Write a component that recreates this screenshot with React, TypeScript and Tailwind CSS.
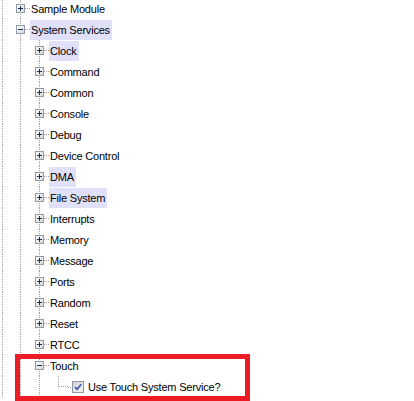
import React from "react";

type CellProps = { top?: boolean; bottom?: boolean; right?: boolean; box?: "plus" | "minus" };

const DOT = "#a0a0a0";

function Cell({ top, bottom, right, box }: CellProps) {
  return (
    <svg width="19" height="21" viewBox="0 0 19 21" shapeRendering="crispEdges" className="shrink-0 block">
      {top && <line x1="9.5" y1="0" x2="9.5" y2="11" stroke={DOT} strokeDasharray="1 1" />}
      {bottom && <line x1="9.5" y1="10" x2="9.5" y2="21" stroke={DOT} strokeDasharray="1 1" />}
      {right && <line x1="10" y1="10.5" x2="19" y2="10.5" stroke={DOT} strokeDasharray="1 1" />}
      {box && (
        <g>
          <defs>
            <linearGradient id="bx" x1="0" y1="0" x2="1" y2="1">
              <stop offset="0" stopColor="#ffffff" />
              <stop offset="1" stopColor="#d8d8d0" />
            </linearGradient>
          </defs>
          <rect x="5.5" y="6.5" width="8" height="8" fill="url(#bx)" stroke="#8e9aa8" />
          <line x1="7" y1="10.5" x2="12" y2="10.5" stroke="#1d2f5e" />
          {box === "plus" && <line x1="9.5" y1="8" x2="9.5" y2="13" stroke="#1d2f5e" />}
        </g>
      )}
    </svg>
  );
}

function RootCol() {
  return (
    <svg width="11" height="21" viewBox="0 0 11 21" shapeRendering="crispEdges" className="shrink-0 block">
      <line x1="2.5" y1="0" x2="2.5" y2="21" stroke={DOT} strokeDasharray="1 1" />
    </svg>
  );
}

function Label({ text, hl }: { text: string; hl?: boolean }) {
  return (
    <div
      className={
        "self-end h-[20px] leading-[20px] pl-[1px] pr-[2px] whitespace-nowrap text-[11px] tracking-[-0.2px] text-black " +
        (hl ? "bg-[#e0e0f9]" : "")
      }
    >
      {text}
    </div>
  );
}

const level1: { t: string; hl?: boolean; open?: boolean }[] = [
  { t: "Clock", hl: true },
  { t: "Command" },
  { t: "Common" },
  { t: "Console" },
  { t: "Debug" },
  { t: "Device Control" },
  { t: "DMA", hl: true },
  { t: "File System", hl: true },
  { t: "Interrupts" },
  { t: "Memory" },
  { t: "Message" },
  { t: "Ports" },
  { t: "Random" },
  { t: "Reset" },
  { t: "RTCC" },
  { t: "Touch", open: true },
];

export default function App() {
  return (
    <div
      className="relative w-[414px] h-[401px] overflow-hidden bg-white"
      style={{ fontFamily: '"Liberation Sans", Arial, sans-serif' }}
    >
      <div className="flex flex-col -mt-[2px]">
        <div className="flex h-[21px]">
          <RootCol />
          <Cell top bottom right box="plus" />
          <Label text="Sample Module" />
        </div>
        <div className="flex h-[21px]">
          <RootCol />
          <Cell top bottom right box="minus" />
          <Label text="System Services" hl />
        </div>
        {level1.map((r) => (
          <div key={r.t} className="flex h-[21px]">
            <RootCol />
            <Cell top bottom />
            <Cell top bottom right box={r.open ? "minus" : "plus"} />
            <Label text={r.t} hl={r.hl} />
          </div>
        ))}
        <div className="flex h-[21px] items-center">
          <RootCol />
          <Cell top bottom />
          <Cell top bottom />
          <Cell top right />
          <div className="w-[3px] h-[21px] flex items-center shrink-0">
            <div className="w-[3px] border-t border-dotted border-[#a0a0a0] mt-[1px]" />
          </div>
          <div className="ml-[1px] shrink-0 flex items-center">
            <svg width="12" height="12" viewBox="0 0 12 12" shapeRendering="crispEdges" className="block">
              <defs>
                <linearGradient id="cb" x1="0" y1="0" x2="1" y2="1">
                  <stop offset="0" stopColor="#d0d0d0" />
                  <stop offset="1" stopColor="#f6f6f6" />
                </linearGradient>
              </defs>
              <rect x="0.5" y="0.5" width="11" height="11" fill="url(#cb)" stroke="#8f9aa6" />
              <path
                d="M3 6 L5 8.3 L9.3 3.2"
                fill="none"
                stroke="#3350b0"
                strokeWidth="1.4"
                shapeRendering="geometricPrecision"
              />
            </svg>
          </div>
          <div className="ml-[4px] h-[20px] leading-[20px] self-end whitespace-nowrap text-[11px] tracking-[-0.2px] text-black">
            Use Touch System Service?
          </div>
        </div>
      </div>
      <div className="absolute left-[15px] top-[354px] w-[235px] h-[47px] border-[5px] border-[#ed1c24]" />
    </div>
  );
}
